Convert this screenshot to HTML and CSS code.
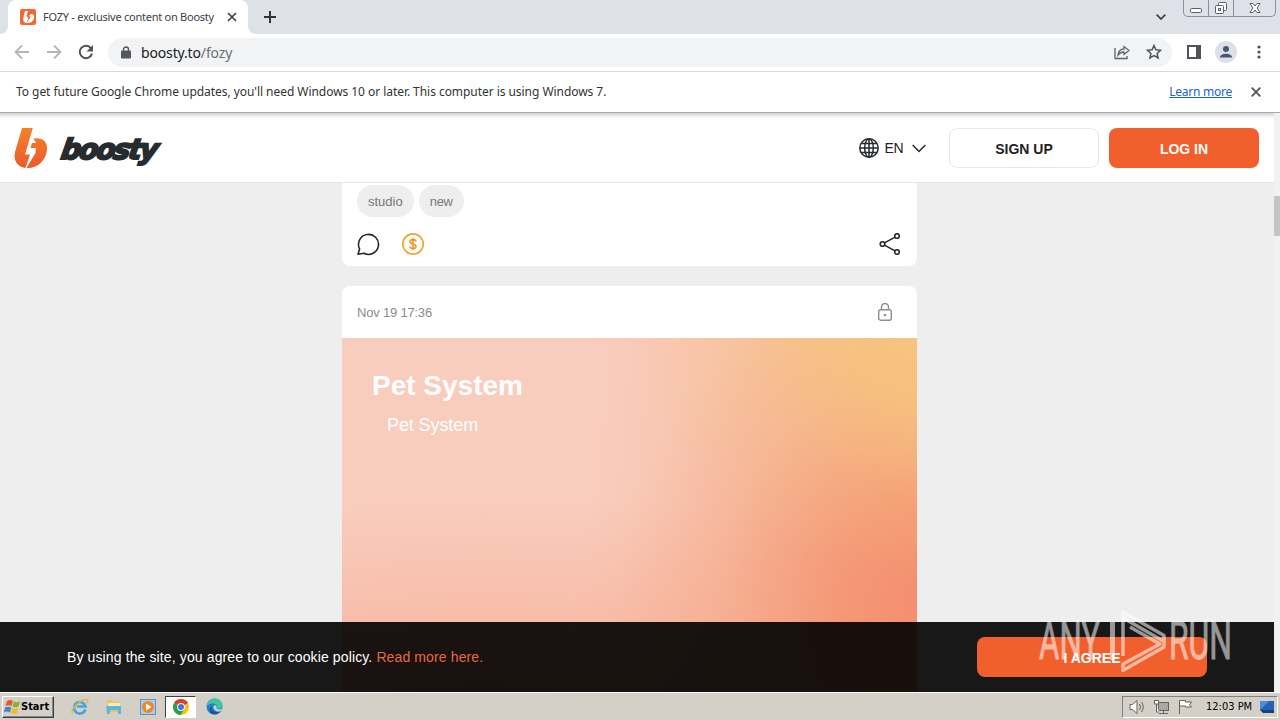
FILE: index.html
```html
<!DOCTYPE html>
<html lang="en">
<head>
<meta charset="UTF-8" />
<meta name="viewport" content="width=device-width, initial-scale=1" />
<title>FOZY - exclusive content on Boosty</title>
<link rel="stylesheet" href="styles.css">
</head>
<body>

<div class="tabstrip">
  <div class="tab-edge left"></div>
  <div class="tab">
    <svg class="favicon" width="16" height="16" viewBox="0 0 16 16">
      <rect width="16" height="16" rx="2" fill="#ee6a35"/>
      <path d="M5 2h3L6.500 7h2.500l2-2c3 0 3.500 2.500 3 4.500-.8 3-3.500 4.500-6 4.500-4 0-5.500-2-4.500-6z" fill="#fff"/>
      <path d="M9.500 2 6.500 8.500h2L6.500 14l4.500-6.500H9z" fill="#ee6a35"/>
    </svg>
    <span class="tab-title">FOZY - exclusive content on Boosty</span>
    <svg class="tab-close" width="10" height="10" viewBox="0 0 10 10"><path d="M1 1l8 8M9 1l-8 8" stroke="#3c4043" stroke-width="1.700"/></svg>
  </div>
  <div class="tab-edge right"></div>
  <svg class="new-tab" width="12" height="12" viewBox="0 0 12 12"><path d="M6 0v12M0 6h12" stroke="#303438" stroke-width="2"/></svg>
  <svg class="tab-search" width="10" height="6" viewBox="0 0 10 6"><path d="M.7.700 5 5 9.300.7" fill="none" stroke="#3c4043" stroke-width="1.700"/></svg>
  <div class="win-buttons">
    <span><svg width="12" height="16" viewBox="0 0 12 16"><rect x=".5" y="8.500" width="11" height="4" rx="1" fill="#fff" stroke="#5b5f6b"/></svg></span>
    <span><svg width="14" height="16" viewBox="0 0 14 16" fill="#fff" stroke="#5b5f6b"><rect x="4.500" y="2.500" width="8" height="8" rx="1"/><rect x="1.500" y="5.500" width="8" height="8" rx="1"/><rect x="4.500" y="8.500" width="2" height="2"/></svg></span>
    <span class="wide"><svg width="12" height="16" viewBox="0 0 12 16"><path d="M1 3.500h3l2 2.500 2-2.500h3L8 8l3 4.500H8L6 10l-2 2.500H1L4 8z" fill="#fff" stroke="#5b5f6b"/></svg></span>
  </div>
</div>

<div class="toolbar">
  <svg class="nav-icon" width="16" height="16" viewBox="0 0 16 16"><path d="M15 8H2M8 1.500 1.500 8 8 14.500" fill="none" stroke="#b4b6b8" stroke-width="1.800"/></svg>
  <svg class="nav-icon" width="16" height="16" viewBox="0 0 16 16"><path d="M1 8h13M8 1.500 14.500 8 8 14.500" fill="none" stroke="#b4b6b8" stroke-width="1.800"/></svg>
  <svg class="nav-icon" width="16" height="16" viewBox="0 0 16 16"><path d="M13 4.300A6.200 6.200 0 1 0 14 9.500" fill="none" stroke="#505357" stroke-width="2"/><path d="M15 1v6.500H8.500z" fill="#505357"/></svg>
  <div class="address">
    <svg width="10" height="13" viewBox="0 0 10 13"><rect y="4.500" width="10" height="8" rx="1" fill="#54575b"/><path d="M2.500 5V3.500a2.500 2.500 0 0 1 5 0V5" fill="none" stroke="#54575b" stroke-width="1.400"/></svg>
    <span class="url">boosty.to<span>/fozy</span></span>
    <svg class="share-page" width="16" height="16" viewBox="0 0 16 16" fill="none" stroke="#5f6368" stroke-width="1.300"><path d="M1 4v10.500h12V12"/><path d="M4 11c.5-4 3-6 6-6V2.500l5 4-5 4V8c-3 0-4.500 1-6 3z"/></svg>
    <svg width="16" height="16" viewBox="0 0 16 16"><path d="M8 1.500l1.900 4.300 4.700.5-3.500 3.100 1 4.600L8 11.600 3.900 14l1-4.600L1.400 6.300l4.700-.5z" fill="none" stroke="#505357" stroke-width="1.500"/></svg>
  </div>
  <svg class="side-panel" width="14" height="14" viewBox="0 0 14 14"><path d="M1 1h12v12H1z" fill="none" stroke="#505357" stroke-width="2"/><path d="M9 1h4v12H9z" fill="#505357"/></svg>
  <svg class="profile" width="22" height="22" viewBox="0 0 22 22"><circle cx="11" cy="11" r="11" fill="#dde1e7"/><circle cx="11" cy="8" r="3" fill="#485672"/><path d="M5 16.500c0-5 12-5 12 0z" fill="#485672"/></svg>
  <svg class="kebab" width="4" height="14" viewBox="0 0 4 14" fill="#505357"><circle cx="2" cy="2" r="1.600"/><circle cx="2" cy="7" r="1.600"/><circle cx="2" cy="12" r="1.600"/></svg>
</div>

<div class="infobar">
  <span class="info-text">To get future Google Chrome updates, you'll need Windows 10 or later. This computer is using Windows 7.</span>
  <a href="#">Learn more</a>
  <svg width="10" height="10" viewBox="0 0 10 10"><path d="M.7.700l8.600 8.600M9.300.7.700 9.300" stroke="#505357" stroke-width="1.800"/></svg>
</div>

<div class="page">
  <div class="site">
    <header>
      <svg class="logo" width="150" height="42" viewBox="0 0 150 42">
        <defs>
          <linearGradient id="flame" x1="0" y1="0" x2="0" y2="1"><stop offset="0" stop-color="#f5822a"/><stop offset="1" stop-color="#ec5a2c"/></linearGradient>
        </defs>
        <path d="M8 1h11l-4.500 15H22l-2.500-4.500C28 10 34 14.500 33 23c-1 10-9 18-19 18C3 41-1 33 1 25z" fill="url(#flame)"/>
        <path d="M19 1h2l-2 11-2.500 9H22l-.5 5L12.500 41h-1L16 27.500h-5z" fill="#fff"/>
        <text transform="translate(46 31.500) skewX(-9)" textLength="97">boosty</text>
      </svg>
      <div class="lang">
        <svg width="20" height="20" viewBox="0 0 20 20" fill="none" stroke="#262a2c" stroke-width="1.500"><circle cx="10" cy="10" r="9.200"/><ellipse cx="10" cy="10" rx="4.300" ry="9.200"/><path d="M10 1v18M1 10h18M2.500 5.500h15M2.500 14.500h15"/></svg>
        <span>EN</span>
        <svg width="14" height="9" viewBox="0 0 14 9"><path d="M.7 1 7 7.500 13.300 1" fill="none" stroke="#262a2c" stroke-width="1.500"/></svg>
      </div>
      <button class="btn signup">SIGN UP</button>
      <button class="btn login">LOG IN</button>
    </header>

    <main>
      <article class="post previous">
        <div class="tags"><span>studio</span><span>new</span></div>
        <div class="actions">
          <svg width="24" height="24" viewBox="0 0 24 24"><path d="M2 22.200l1.600-5.300A10 10 0 1 1 8 21.300z" fill="none" stroke="#262a2c" stroke-width="1.600" stroke-linejoin="round"/></svg>
          <svg width="24" height="24" viewBox="0 0 24 24"><circle cx="12" cy="12" r="10.200" fill="none" stroke="#f0a52b" stroke-width="1.700"/><path d="M15 9.300C14.500 7 9 7 9 9.700c0 2.600 6 1.900 6 4.700 0 2.700-5.700 2.700-6.200.2M12 6v12" fill="none" stroke="#f0961e" stroke-width="1.600"/></svg>
          <svg class="share" width="22" height="22" viewBox="0 0 22 22" fill="none" stroke="#262a2c" stroke-width="1.600"><circle cx="3.500" cy="11" r="2.300"/><circle cx="18" cy="3" r="2.300"/><circle cx="18" cy="19" r="2.300"/><path d="M5.500 9.900 16 4.100M5.500 12.100 16 17.900"/></svg>
        </div>
      </article>

      <article class="post">
        <div class="post-head">
          <span>Nov 19 17:36</span>
          <svg width="14" height="18" viewBox="0 0 14 18" fill="none" stroke="#8d8d8d" stroke-width="1.400"><rect x=".7" y="6.700" width="12.600" height="10.500" rx="2"/><path d="M3.500 6.500V4a3.500 3.500 0 0 1 7 0v2.500"/><circle cx="7" cy="12" r=".6"/></svg>
        </div>
        <div class="cover">
          <h2>Pet System</h2>
          <p>Pet System</p>
        </div>
      </article>
    </main>

    <div class="cookies">
      <p>By using the site, you agree to our cookie policy. <a href="#">Read more here.</a></p>
      <button class="btn agree">I AGREE</button>
    </div>
  </div>
  <div class="scrollbar"><div class="thumb"></div></div>
</div>

<div class="taskbar">
  <div class="start">
    <svg width="17" height="16" viewBox="0 0 17 16"><path d="M3 2q3-2 6 0L7.500 7q-3-1.500-6 0z" fill="#e4592b"/><path d="M10 2.500q3 1.500 6 0L14.500 7.500q-3 1.500-6 0z" fill="#77b82f"/><path d="M1.200 8.500q3-1.500 6 0L6 13.500q-3-2-6 0z" fill="#3c84cf"/><path d="M8.200 9q3 1.500 6 0L13 14q-3 1.500-6 0z" fill="#f4b92a"/></svg>
    Start
  </div>
  <svg class="task" width="18" height="18" viewBox="0 0 18 18"><path d="M14.500 11.500A5.800 5.800 0 1 1 14.600 8.500H6" fill="none" stroke="#45a5df" stroke-width="2.600"/><path d="M1.500 15.500C-1 12 9 1 16 1.500c1.500.5 1 2.500 0 4" fill="none" stroke="#e3b73a" stroke-width="1.300"/></svg>
  <svg class="task" width="18" height="18" viewBox="0 0 18 18"><path d="M2 2h5l1 2h7v10H2z" fill="#e6c35c"/><path d="M3 5h12v4H3z" fill="#fbeeb0"/><path d="M1 8h15v8h-3v-4H5v4H2z" fill="#62b5df"/></svg>
  <svg class="task" width="18" height="18" viewBox="0 0 18 18"><rect x="1.500" y="1.500" width="15" height="15" fill="#a9cdeb" stroke="#5d93c5"/><circle cx="9" cy="9" r="6" fill="#f28722"/><path d="M7 5.500v7L12.500 9z" fill="#fff"/></svg>
  <div class="task-active">
    <svg width="16" height="16" viewBox="0 0 16 16"><circle cx="8" cy="8" r="8" fill="#fbc116"/><path d="M8 8 1.100 4A8 8 0 0 1 14.900 4z" fill="#e33b2e"/><path d="M8 8 1.100 4A8 8 0 0 0 7.500 16L11.500 10z" fill="#299f4c"/><circle cx="8" cy="8" r="3.900" fill="#fff"/><circle cx="8" cy="8" r="3" fill="#3b78e7"/></svg>
  </div>
  <svg class="task edge" width="17" height="17" viewBox="0 0 17 17"><circle cx="8.500" cy="8.500" r="8" fill="#1b83cf"/><path d="M.6 8C1 3 5 .5 8.500.5c5 0 8 3.500 8 6.500 0 4-5 4.500-6 3 1.500-3-1-4.500-3.500-4.500C4 5.500 2 6.500.6 8z" fill="#3fc6a0"/><path d="M6 8c-1.500 4 2 7 8.500 5.500A8 8 0 0 1 5 15.500C2 12 4 9 6 8z" fill="#155a9f"/><path d="M8 7.500c2-1 3 1 2.300 2.500.7 1.500 3.500 2 5.800.5-.5 2-1.600 2.700-2.600 3C9 14 6.500 10 8 7.500z" fill="#d5d1ca"/></svg>
  <div class="tray">
    <svg width="17" height="16" viewBox="0 0 17 16" fill="#fff" stroke="#66625d"><path d="M1 5.500h2.500L8 1.500v13L3.500 10.500H1z"/><path d="M10.500 5q2 3 0 6M12.500 3q3.500 5 0 10" fill="none"/></svg>
    <svg width="17" height="16" viewBox="0 0 17 16" fill="#fff" stroke="#66625d"><rect x="5.500" y="3.500" width="10" height="8" fill="#aaa8a5"/><path d="M6 14.500h9M10.500 12v2"/><path d="M1.500 1.500h4V5h-4zM3.500 5v8H6"/></svg>
    <svg width="17" height="16" viewBox="0 0 17 16" fill="#fff" stroke="#66625d"><path d="M2.500 15V1.500h6V3h6l-2 3 2 2h-6V7h-6"/></svg>
    <span class="clock">12:03 PM</span>
    <svg class="desktop" width="16" height="14" viewBox="0 0 16 14"><path d="M1 1h14v9H1z" fill="#2463b8"/><path d="M1 1h9L2 9H1z" fill="#4c8fe0"/><path d="M1 10h14v3H4z" fill="#1b3f78"/></svg>
  </div>
</div>

<svg class="watermark" width="200" height="66" viewBox="0 0 200 66">
  <text x="3" y="51" textLength="61" lengthAdjust="spacingAndGlyphs">ANY</text>
  <path d="M76.500 14v38" stroke-width="5"/>
  <path d="M87 48V4l41 23.500v6L89 11" stroke-width="3.500" stroke-linejoin="round"/>
  <path d="M94 19l30 17-37 20v6.500l41-23.500v-6" stroke-width="3.500" stroke-linejoin="round"/>
  <text x="133" y="51" textLength="63" lengthAdjust="spacingAndGlyphs">RUN</text>
</svg>

</body>
</html>
```
FILE: styles.css
```css
* {
  box-sizing: border-box;
}
body {
  margin: 0;
  width: 1280px;
  height: 720px;
  overflow: hidden;
  display: flex;
  flex-direction: column;
  font-family: "Liberation Sans", Arial, sans-serif;
  color: #222;
  background: #eee;
}
svg {
  display: block;
  flex: none;
}

/* browser */
.tabstrip, .toolbar, .infobar {
  font-family: "Noto Sans", Tahoma, sans-serif;
  flex: none;
  display: flex;
  align-items: center;
}
.tabstrip {
  height: 34px;
  background: #dee1e8;
}
.tab-edge {
  align-self: stretch;
  width: 8px;
  background: #fff;
}
.tab-edge::before {
  content: "";
  display: block;
  height: 100%;
  background: #dee1e8;
}
.tab-edge.left::before {
  border-bottom-right-radius: 8px;
}
.tab-edge.right::before {
  border-bottom-left-radius: 8px;
}
.tab {
  width: 240px;
  height: 34px;
  padding: 0 11px 0 12px;
  background: #fff;
  border-radius: 8px 8px 0 0;
  display: flex;
  align-items: center;
}
.tab-title {
  margin-left: 7px;
  padding-bottom: 1px;
  font-size: 11px;
  letter-spacing: -0.25px;
  white-space: nowrap;
  color: #3c4043;
}
.tab-close {
  margin-left: auto;
}
.new-tab {
  margin-left: 8px;
}
.tab-search {
  margin-left: auto;
  margin-right: 17px;
}
.win-buttons {
  align-self: flex-start;
  height: 17px;
  width: 93px;
  margin-right: 4px;
  display: flex;
  border: 1px solid #8c909b;
  border-top: 0;
  border-radius: 0 0 5px 5px;
}
.win-buttons span {
  width: 25px;
  display: flex;
  justify-content: center;
  border-right: 1px solid #8c909b;
}
.win-buttons .wide {
  width: 41px;
  border: 0;
}
.toolbar {
  height: 38px;
  padding: 0 19px 1px 14px;
  background: #fff;
  border-bottom: 1px solid #d9dadc;
}
.nav-icon {
  margin-right: 16px;
}
.address {
  width: 1064px;
  height: 29px;
  margin-left: -2px;
  padding: 0 10px 0 13px;
  border-radius: 15px;
  background: #f1f3f4;
  display: flex;
  align-items: center;
}
.url {
  margin-left: 10px;
  font-size: 14px;
  letter-spacing: -0.15px;
  color: #202124;
}
.url span {
  color: #6c7074;
}
.share-page {
  margin-left: auto;
  margin-right: 16px;
}
.side-panel {
  margin-left: 15px;
}
.profile {
  margin-left: 14px;
}
.kebab {
  margin-left: auto;
}
.infobar {
  height: 41px;
  padding: 0 19px 0 16px;
  background: #fff;
  border-bottom: 1px solid #aaa;
  font-size: 12px;
  letter-spacing: -0.05px;
  color: #333;
}
.info-text {
  white-space: nowrap;
}
.info-text, .infobar a {
  padding-bottom: 1px;
}
.infobar a {
  margin-left: auto;
  margin-right: 19px;
  color: #1a66c4;
  letter-spacing: -0.25px;
}

/* site */
.page {
  flex: 1;
  min-height: 0;
  display: flex;
}
.site {
  position: relative;
  width: 1274px;
  overflow: hidden;
}
header {
  height: 70px;
  padding: 1px 15px 0 14px;
  background: linear-gradient(#d0d0d0, #e6e6e6 2px, #f4f4f4 4px, #fff 5px);
  border-bottom: 1px solid #e5e5e5;
  display: flex;
  align-items: center;
}
.logo {
  overflow: visible;
}
.logo text {
  font: italic bold 28px "DejaVu Sans", sans-serif;
  fill: #262c2e;
  stroke: #262c2e;
  stroke-width: 2px;
}
.lang {
  margin-left: auto;
  margin-right: 23px;
  display: flex;
  align-items: center;
  font-size: 14px;
  letter-spacing: -0.5px;
}
.lang span {
  margin: 0 9px 0 6px;
}
.btn {
  width: 150px;
  height: 40px;
  padding: 2px 0 0;
  border: 0;
  border-radius: 8px;
  background: #f15f2c;
  color: #fff;
  font: bold 14px "Liberation Sans", Arial, sans-serif;
}
.signup {
  background: #fff;
  border: 1px solid #e8e8e8;
  color: #222;
  margin-right: 10px;
}
main {
  width: 575px;
  margin-left: 342px;
}
.post {
  background: #fff;
  border-radius: 8px;
  overflow: hidden;
}
.previous {
  height: 83px;
  padding: 2px 16px 0 15px;
  margin-bottom: 20px;
  border-radius: 0 0 8px 8px;
}
.tags {
  display: flex;
  gap: 5px;
}
.tags span {
  height: 32px;
  padding: 0 11px;
  border-radius: 16px;
  background: #eee;
  color: #777;
  font-size: 13px;
  line-height: 33px;
}
.tags span + span {
  letter-spacing: -0.3px;
}
.actions {
  display: flex;
  align-items: center;
  gap: 21px;
  margin-top: 15px;
  margin-left: -1px;
}
.share {
  margin-left: auto;
}
.post-head {
  height: 52px;
  padding: 0 25px 0 15px;
  display: flex;
  align-items: center;
  justify-content: space-between;
  font-size: 13px;
  letter-spacing: -0.2px;
  color: #8c8c8c;
}
.cover {
  height: 400px;
  padding: 30px;
  color: #fff;
  background:
    radial-gradient(ellipse 330px 270px at 107% -6%, #f8c67c, rgba(247, 198, 124, 0.75) 35%, rgba(247, 198, 124, 0.2) 70%, rgba(247, 198, 124, 0) 100%),
    radial-gradient(ellipse 330px 340px at 105% 66%, rgba(244, 137, 106, 0.95), rgba(244, 139, 104, 0.7) 30%, rgba(244, 141, 106, 0.2) 70%, rgba(244, 141, 106, 0) 100%),
    radial-gradient(ellipse 700px 230px at 25% 97%, rgba(246, 165, 140, 0.9), rgba(246, 168, 143, 0.5) 40%, rgba(247, 174, 148, 0) 100%),
    linear-gradient(95deg, #f9cdbe 42%, #f5b795 88%);
}
.cover h2 {
  margin: 0;
  font-size: 28px;
  line-height: 35px;
}
.cover p {
  margin: 11px 15px;
  font-size: 18px;
  line-height: 22px;
  letter-spacing: -0.1px;
}
.cookies {
  position: absolute;
  left: 0;
  right: 0;
  bottom: 0;
  height: 70px;
  padding: 0 67px;
  background: rgba(0, 0, 0, 0.9);
  color: #fff;
  display: flex;
  align-items: center;
  justify-content: space-between;
  font-size: 14px;
  letter-spacing: 0.12px;
}
.cookies a {
  color: #e8683f;
  text-decoration: none;
}
.agree {
  width: 230px;
}
.scrollbar {
  width: 6px;
  padding-top: 83px;
  background: #f1f1f1;
}
.thumb {
  height: 40px;
  background: #c4c4c4;
}

/* windows taskbar */
.taskbar {
  flex: none;
  height: 28px;
  padding: 0 2px;
  background: #d4d0c8;
  border-top: 1px solid #fff;
  display: flex;
  align-items: center;
  font-family: "DejaVu Sans Condensed", Tahoma, sans-serif;
  font-size: 11px;
  color: #000;
}
.start {
  width: 52px;
  height: 22px;
  padding-left: 1px;
  display: flex;
  align-items: center;
  font-weight: bold;
  border: 1px solid;
  border-color: #fff #404040 #404040 #fff;
  box-shadow: inset -1px -1px #888;
  margin-right: 17px;
}
.task {
  margin-right: 16px;
}
.task-active {
  width: 31px;
  height: 22px;
  margin-left: -8px;
  margin-right: 10px;
  background: #fff;
  border: 1px solid;
  border-color: #404040 #fff #fff #404040;
  display: flex;
  align-items: center;
  justify-content: center;
}
.tray {
  margin-left: auto;
  height: 22px;
  width: 156px;
  padding-left: 6px;
  display: flex;
  align-items: center;
  gap: 7px;
  border: 1px solid;
  border-color: #808080 #fff #fff #808080;
}
.clock {
  margin-left: 5px;
  white-space: nowrap;
}

/* recorder watermark, over everything */
.watermark {
  position: absolute;
  left: 1036px;
  top: 608px;
  opacity: 0.55;
  overflow: visible;
  fill: none;
  stroke: #fff;
}
.watermark text {
  font: 400 53px Roboto, sans-serif;
  fill: #fff;
  stroke-width: 0.8px;
}
```
